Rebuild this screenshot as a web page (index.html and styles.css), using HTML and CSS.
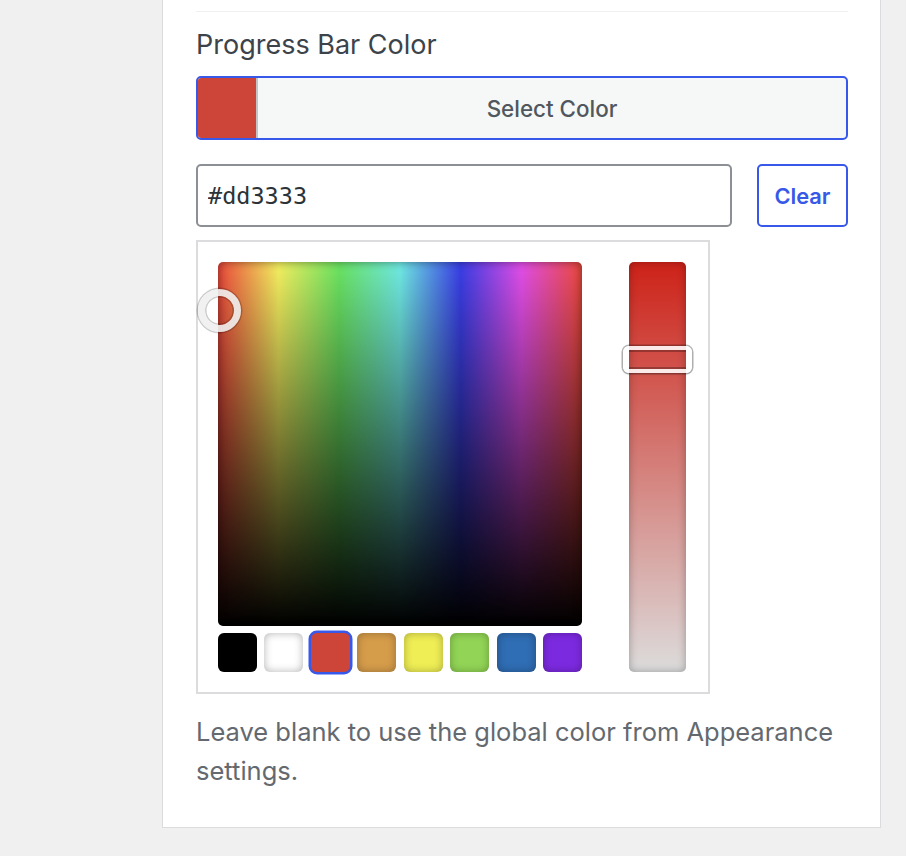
FILE: index.html
```html
<!DOCTYPE html>
<html>
<head>
<meta charset="utf-8">
<link rel="stylesheet" href="styles.css">
</head>
<body>
<div class="panel">
  <div class="divider"></div>
  <div class="field">
    <label class="label" for="hex">Progress Bar Color</label>
    <div class="picker">
      <button class="result" type="button"><span class="result-swatch"></span><span class="result-text">Select Color</span></button>
      <div class="input-row">
        <input id="hex" class="hex" type="text" value="#dd3333">
        <button class="clear" type="button">Clear</button>
      </div>
      <div class="iris">
        <div class="iris-main">
          <div class="square"><span class="square-handle"></span></div>
          <div class="palette">
            <span class="sw sw-black"></span>
            <span class="sw sw-white"></span>
            <span class="sw sw-red is-active"></span>
            <span class="sw sw-orange"></span>
            <span class="sw sw-yellow"></span>
            <span class="sw sw-green"></span>
            <span class="sw sw-blue"></span>
            <span class="sw sw-purple"></span>
          </div>
        </div>
        <div class="strip"><span class="strip-handle"></span></div>
      </div>
    </div>
    <p class="description">Leave blank to use the global color from Appearance settings.</p>
  </div>
</div>
</body>
</html>
```

FILE: styles.css
```css
* { box-sizing: border-box; }
html, body { margin: 0; padding: 0; }
body {
  background: #f0f0f1;
  font-family: Inter, "Liberation Sans", sans-serif;
  color: #3c434a;
}
.panel {
  margin-left: 162px;
  width: 719px;
  background: #fff;
  border: 1px solid #dcdcde;
  border-top: none;
  padding: 11px 32px 37px 33px;
}
.divider {
  height: 1px;
  background: #f0f0f1;
}
.field { padding-top: 15px; }
.label {
  display: block;
  font-size: 27px;
  line-height: 36px;
  color: #3c434a;
  margin-bottom: 13px;
}
.result {
  display: flex;
  width: 100%;
  height: 64px;
  padding: 0;
  border: 2px solid #3858e9;
  border-radius: 5px;
  background: #f6f7f7;
  overflow: hidden;
  cursor: pointer;
}
.result-swatch {
  width: 60px;
  height: 100%;
  background: #cc4538;
  border-right: 2px solid #c3c4c7;
}
.result-text {
  flex: 1;
  display: flex;
  align-items: center;
  justify-content: center;
  font-family: Inter, "Liberation Sans", sans-serif;
  font-size: 22.4px;
  font-weight: 500;
  color: #50575e;
}
.input-row {
  display: flex;
  gap: 25px;
  margin-top: 24px;
}
.hex {
  flex: 1;
  min-width: 0;
  height: 63px;
  border: 2px solid #8c8f94;
  border-radius: 5px;
  padding: 0 10px;
  font-family: "DejaVu Sans Mono", "Liberation Mono", monospace;
  font-size: 23.5px;
  color: #2c3338;
  background: #fff;
}
.clear {
  width: 91px;
  height: 63px;
  border: 2px solid #3858e9;
  border-radius: 5px;
  background: #fff;
  color: #3858e9;
  font-family: Inter, "Liberation Sans", sans-serif;
  font-size: 21.8px;
  font-weight: 600;
  padding: 0;
}
.iris {
  display: flex;
  gap: 47px;
  width: 514px;
  margin-top: 13px;
  border: 2px solid #dcdcde;
  padding: 20px 22px 20px 20px;
  background: #fff;
}
.iris-main { width: 364px; }
.square {
  position: relative;
  width: 364px;
  height: 364px;
  border-radius: 5px;
  background:
    linear-gradient(to bottom, rgba(0,0,0,0) 0%, #000 100%),
    linear-gradient(to right, #ee4a3c 0%, #f4f060 16.67%, #6ae462 33.33%, #70eae4 50%, #3a3ee6 66.67%, #e24ee8 83.33%, #ee4a3c 100%);
  box-shadow: inset 0 0 10px rgba(0,0,0,0.45);
}
.square-handle {
  position: absolute;
  left: -20px;
  top: 27px;
  width: 43px;
  height: 43px;
  border-radius: 50%;
  border: 7.5px solid rgba(240,240,240,0.9);
  box-shadow: 0 0 0 1.5px rgba(0,0,0,0.2), inset 0 0 0 1.5px rgba(0,0,0,0.2);
}
.palette {
  display: flex;
  justify-content: space-between;
  margin-top: 7px;
}
.sw {
  width: 39px;
  height: 39px;
  border-radius: 6px;
  box-shadow: inset 0 0 8px rgba(0,0,0,0.3);
}
.sw-black { background: #000; }
.sw-white { background: #fff; }
.sw-red { background: #cc4538; }
.sw-orange { background: #d59c4a; }
.sw-yellow { background: #efee55; }
.sw-green { background: #92d556; }
.sw-blue { background: #2f6db4; }
.sw-purple { background: #7c2ae0; }
.sw.is-active {
  box-shadow: 0 0 0 2.5px #3858e9;
}
.strip {
  position: relative;
  width: 57px;
  height: 410px;
  border-radius: 5px;
  background: linear-gradient(to bottom, #cd2218 0%, #dcdcdc 100%);
  box-shadow: inset 0 0 9px rgba(0,0,0,0.3);
}
.strip-handle {
  position: absolute;
  left: -6px;
  right: -6px;
  top: 84px;
  height: 27px;
  border: 4px solid rgba(255,255,255,0.88);
  border-radius: 6px;
  box-shadow: 0 0 0 1.5px rgba(0,0,0,0.28), 0 1px 3px rgba(0,0,0,0.15);
}
.strip-handle::before {
  content: "";
  position: absolute;
  left: 2px;
  right: 2px;
  top: 0;
  bottom: 0;
  border-top: 2px solid rgba(0,0,0,0.28);
  border-bottom: 2px solid rgba(0,0,0,0.28);
}
.description {
  margin: 18px 0 0;
  font-size: 25.5px;
  line-height: 39px;
  color: #646970;
}
```
